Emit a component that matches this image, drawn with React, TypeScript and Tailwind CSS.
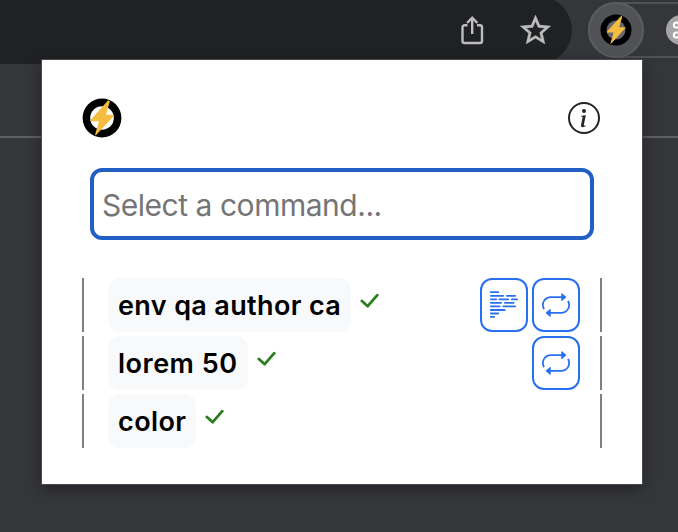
import { BsInfoCircle, BsRepeat } from "react-icons/bs";

function Bolt({ className, inner }: { className: string; inner: string }) {
  return (
    <svg viewBox="0 0 40 40" className={className}>
      <circle cx="20" cy="20" r="19.4" fill="#000" />
      <circle cx="20" cy="20" r="11.8" fill={inner} />
      <path d="M26.4 3 8.8 22.6H17.8L13.7 36.6 31.5 17.3H23.2L27.2 3.4Z" fill="#f4bd40" stroke="#f4bd40" strokeWidth="1.2" strokeLinejoin="round" />
    </svg>
  );
}

function TextLines() {
  const lines = [
    [0, 0, 9], [0, 3.6, 14], [16, 3.6, 10], [0, 7.2, 7], [8.5, 7.2, 10.5], [21, 7.2, 7],
    [0, 10.7, 12], [14, 10.7, 10.5], [0, 14.2, 10.5], [12.5, 14.2, 13.5], [0, 17.8, 15.5], [0, 21.3, 9], [0, 24.7, 5],
  ];
  return (
    <svg viewBox="0 0 28 28" className="size-7">
      {lines.map(([x, y, w]) => (
        <rect key={`${x}-${y}`} x={x} y={y + 0.3} width={w} height="1.8" rx=".7" fill="#2870f0" />
      ))}
    </svg>
  );
}

const tool = "flex h-[54px] w-12 items-center justify-center rounded-xl border-2 border-[#2870f0] text-[#2870f0]";

function Row({ name, width, tracking, text, repeat }: { name: string; width: string; tracking: string; text?: boolean; repeat?: boolean }) {
  return (
    <div className="flex h-[54px] border-x-2 border-[#808080] pr-5 pl-6">
      <button className={`h-[54px] shrink-0 rounded-[12px] bg-[#f8f9fb] pt-0.5 pl-2.5 text-left text-[27px] font-semibold whitespace-nowrap text-black ${width} ${tracking}`}>{name}</button>
      <svg viewBox="0 0 20 16" className="mt-[15px] ml-[9px] h-4 w-5 shrink-0" fill="none" stroke="#2c7d20" strokeWidth="2.8" strokeLinecap="round" strokeLinejoin="round">
        <path d="M1.9 8 7.7 13.2 17.3 2.2" />
      </svg>
      <div className="ml-auto flex gap-1">
        {text && <button className={tool}><TextLines /></button>}
        {repeat && <button className={tool}><BsRepeat className="size-7" /></button>}
      </div>
    </div>
  );
}

export default function App() {
  return (
    <div className="relative h-[532px] w-[678px] overflow-hidden bg-[#35363a] font-['Inter',sans-serif]">
      <header className="flex h-16">
        <div className="-mt-1 flex h-[68px] w-[572px] shrink-0 justify-end rounded-r-full bg-[#202124] pt-[19px] pr-[21px]">
          <svg viewBox="0 0 24 30" className="mr-9 h-[30px] w-6" fill="none" stroke="#bcbdbc" strokeWidth="2.4">
            <path d="M7.5 10.2H4.5a2 2 0 0 0-2 2V26a2 2 0 0 0 2 2H20a2 2 0 0 0 2-2V12.2a2 2 0 0 0-2-2h-3M12.2 19V2.5M7 8 12.2 2.8 17.4 8" />
          </svg>
          <svg viewBox="2 2 20 19" className="h-[29px] w-[31px]" fill="#bcbdbc" stroke="#bcbdbc" strokeWidth=".25">
            <path d="m22 9.24-7.19-.62L12 2 9.19 8.63 2 9.24l5.46 4.73L5.82 21 12 17.27 18.18 21l-1.63-7.03L22 9.24zM12 15.4l-3.76 2.27 1-4.28-3.32-2.88 4.38-.38L12 6.1l1.71 4.04 4.38.38-3.32 2.88 1 4.28L12 15.4z" />
          </svg>
        </div>
        <div className="mt-0.5 ml-4 flex h-14 w-[140px] shrink-0 items-center rounded-l-full border-2 border-[#505154]">
          <div className="-ml-0.5 flex size-14 shrink-0 items-center justify-center rounded-full border-2 border-[#5c5d60] bg-[#515256]">
            <Bolt className="-ml-px size-[32px]" inner="#69696b" />
          </div>
          <svg viewBox="0 0 30 30" className="ml-[22px] size-[30px] shrink-0">
            <circle cx="15" cy="15" r="15" fill="#a5a5a5" />
            <path d="M13 12.6V10a2.6 2.6 0 1 0-2.6 2.6h11.2A2.6 2.6 0 1 0 19 10v10a2.6 2.6 0 1 0 2.6-2.6H10.4A2.6 2.6 0 1 0 13 20Z" fill="none" stroke="#fff" strokeWidth="2" />
          </svg>
        </div>
      </header>
      <div className="h-[74px] border-b-2 border-[#5f6063]" />
      <main className="absolute top-[60px] left-[42px] h-[424px] w-[600px] bg-white px-10 pt-[38px] shadow-[0_0_0_1px_#48494b,0_4px_14px_rgba(0,0,0,0.4)]">
        <div className="flex h-10 items-center justify-between">
          <Bolt className="size-10" inner="#fff" />
          <BsInfoCircle className="mr-0.5 size-8 text-[#212529]" />
        </div>
        <input
          className="mt-[30px] ml-2 block h-[72px] w-[504px] rounded-xl border-4 border-[#215fc5] px-2 pt-0.5 text-[30px] tracking-[-0.47px] text-black outline-none placeholder:text-[#757575]"
          placeholder="Select a command..."
        />
        <div className="mt-[38px] flex flex-col gap-1">
          <Row name="env qa author ca" width="w-[243px]" tracking="tracking-[0.36px]" text repeat />
          <Row name="lorem 50" width="w-[140px]" tracking="tracking-[0.5px]" repeat />
          <Row name="color" width="w-[88px]" tracking="tracking-[0.4px]" />
        </div>
      </main>
    </div>
  );
}
